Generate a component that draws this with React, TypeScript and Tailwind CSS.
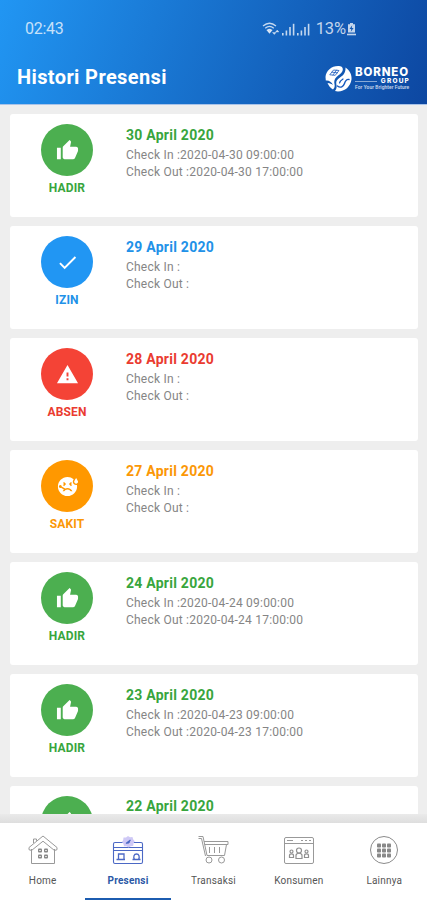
import { MdCheck, MdSick, MdThumbUp, MdWarning } from "react-icons/md";
import type { ReactElement } from "react";
import type { IconType } from "react-icons";

type Status = "HADIR" | "IZIN" | "ABSEN" | "SAKIT";

interface Attendance {
  date: string;
  status: Status;
  checkIn: string;
  checkOut: string;
}

const records: Attendance[] = [
  { date: "30 April 2020", status: "HADIR", checkIn: "2020-04-30 09:00:00", checkOut: "2020-04-30 17:00:00" },
  { date: "29 April 2020", status: "IZIN", checkIn: "", checkOut: "" },
  { date: "28 April 2020", status: "ABSEN", checkIn: "", checkOut: "" },
  { date: "27 April 2020", status: "SAKIT", checkIn: "", checkOut: "" },
  { date: "24 April 2020", status: "HADIR", checkIn: "2020-04-24 09:00:00", checkOut: "2020-04-24 17:00:00" },
  { date: "23 April 2020", status: "HADIR", checkIn: "2020-04-23 09:00:00", checkOut: "2020-04-23 17:00:00" },
];

// Last row is cut by the tab bar, so only its date is in view
const partialRecord = { date: "22 April 2020", status: "HADIR" as Status };

const statusStyles: Record<Status, { icon: IconType; bg: string; text: string }> = {
  HADIR: { icon: MdThumbUp, bg: "bg-[#4caf50]", text: "text-[#38a53d]" },
  IZIN: { icon: MdCheck, bg: "bg-[#2196f3]", text: "text-[#2191e8]" },
  ABSEN: { icon: MdWarning, bg: "bg-[#f44336]", text: "text-[#ea3b30]" },
  SAKIT: { icon: MdSick, bg: "bg-[#ff9800]", text: "text-[#fb9706]" },
};

function SignalBars(): ReactElement {
  return (
    <svg className="h-[13px] w-[13px]" viewBox="0 0 13 13" fill="currentColor">
      <rect x="0" y="10" width="1.6" height="2.5" />
      <rect x="3.6" y="7.5" width="1.6" height="5" />
      <rect x="7.2" y="4" width="1.6" height="8.5" />
      <rect x="10.8" y="0.8" width="1.6" height="11.7" />
    </svg>
  );
}

function StatusBar(): ReactElement {
  return (
    <div className="flex h-[57px] items-center justify-between pl-[25px] pr-[71px] pt-px text-white/75">
      <span className="text-[16px] leading-none tracking-[-0.3px]">02:43</span>
      <div className="flex items-center">
        <svg className="h-[14px] w-[18px]" viewBox="0 0 18 14" fill="none" stroke="currentColor" strokeWidth="1.3">
          <path d="M1 4Q7.5 -1.5 14 4" />
          <path d="M3.2 6.2Q7.5 2.6 11.8 6.2" />
          <path d="M5.3 8.2Q7.5 6.6 9.7 8.2L7.5 10.8Z" fill="currentColor" />
          <path d="M10.5 10.5l1.8 2 1.8-2zM13.6 10l1.6-2 1.7 2z" fill="currentColor" strokeWidth="0.4" />
        </svg>
        <div className="ml-[2px] flex gap-[2px]">
          <SignalBars />
          <SignalBars />
        </div>
        <span className="ml-[6px] text-[16.5px] leading-none tracking-[-0.1px]">13%</span>
        <svg className="ml-px h-[13px] w-[9px]" viewBox="0 0 9 13" fill="currentColor">
          <path fillRule="evenodd" d="M3 0h3v1.3h2v8.2H1V1.3h2zM5.2 2.2 2.5 6h1.8l-.5 2.8L6.6 5H4.8z" />
          <rect x="0" y="10.7" width="9" height="1.6" />
        </svg>
      </div>
    </div>
  );
}

function BrandLogo(): ReactElement {
  return (
    <div className="flex items-center gap-[3px] pt-[3px] text-white">
      <svg className="h-[27px] w-[27px]" viewBox="0 0 27 27">
        <path
          d="M0.500 12C1 5.500 7 0.500 14 1C17.500 1.300 18.500 3.500 17.500 6C16.500 8.500 13.500 10 11.500 12C9 14.500 9 17 9.500 19C10 21.500 9.500 23 8 24.500C5.500 23 3.500 20.500 2.500 18C5 18 6.500 19 8 20C6.500 16.500 3.500 15 0.800 15.500Z"
          fill="#fff"
        />
        <path
          d="M20.500 2.500C25 5.500 27 10 26.500 14.500C25.500 21.500 20 26.500 13 26.500C11.800 26.500 10.800 26.300 10 26C12 23.500 11.800 21.500 11.300 19C10.800 16 12 14.500 15 12.500C18.500 10.200 20.800 7.500 20.500 2.500Z"
          fill="#fff"
        />
        <g fill="none" stroke="#1558bd" strokeLinecap="round">
          <path d="M12.500 21C15.500 23.500 18.500 21.500 19.500 18.500C20.500 15.500 22 14 24 14.500" strokeWidth="1.400" />
          <path d="M14.500 18C15 16 16.500 15 18 14" strokeWidth="1.200" />
          <path d="M5 9.500L8.500 5L14 5.500L10.500 10ZM7 7.200L12.300 7.800M11.500 5L8 10" strokeWidth="0.800" />
        </g>
      </svg>
      <div className="flex w-[55px] flex-col">
        <span className="whitespace-nowrap font-[Inter,sans-serif] text-[11.5px] font-extrabold leading-[12px] tracking-[0.85px]">
          BORNEO
        </span>
        <div className="flex items-center justify-between">
          <span className="h-px w-[22px] bg-white/50" />
          <span className="font-[Inter,sans-serif] text-[6.5px] font-extrabold leading-[7px] tracking-[1.2px]">
            GROUP
          </span>
        </div>
        <span className="whitespace-nowrap text-[4.800px] font-medium leading-[6px] tracking-[0.12px] text-white/80">
          For Your Brighter Future
        </span>
      </div>
    </div>
  );
}

function AttendanceCard({ record }: { record: Attendance }): ReactElement {
  const { icon: Icon, bg, text } = statusStyles[record.status];
  return (
    <div className="flex h-[103px] shrink-0 rounded-[3px] bg-white">
      <div className="flex w-[114px] flex-col items-center pt-[10px]">
        <div className={`flex size-[52px] items-center justify-center rounded-full text-white ${bg}`}>
          <Icon size={23} />
        </div>
        <span className={`mt-[5px] text-[12px] font-bold leading-[14px] tracking-[0.15px] ${text}`}>
          {record.status}
        </span>
      </div>
      <div className="pl-[2px] pt-[12px]">
        <h2 className={`text-[14px] font-bold leading-[18px] tracking-[0.25px] ${text}`}>{record.date}</h2>
        <div className="mt-[3px] text-[12px] leading-[16.5px] tracking-[0.22px] text-[#858585]">
          <p>Check In :{record.checkIn}</p>
          <p>Check Out :{record.checkOut}</p>
        </div>
      </div>
    </div>
  );
}

function PartialCard(): ReactElement {
  const { icon: Icon, bg, text } = statusStyles[partialRecord.status];
  return (
    <div className="flex h-[28px] shrink-0 overflow-hidden rounded-t-[3px] bg-white">
      <div className="flex w-[114px] flex-col items-center pt-[10px]">
        <div className={`flex size-[52px] shrink-0 items-center justify-center rounded-full text-white ${bg}`}>
          <Icon size={23} />
        </div>
      </div>
      <h2 className={`pl-[2px] pt-[12px] text-[14px] font-bold leading-[16px] tracking-[0.25px] ${text}`}>
        {partialRecord.date}
      </h2>
    </div>
  );
}

function HomeIcon(): ReactElement {
  return (
    <svg width="30" height="30" viewBox="0 0 30 30" fill="none" stroke="#999" strokeWidth="1">
      <path d="M3.5 14v14.500h23V14" />
      <path d="M5.500 8V4h3v1.800M15 1 1 12.500v2.200l2.500.8L15 6.200l11.500 9.300 2.500-.8v-2.200z" />
      <g fill="#888" stroke="none">
        <rect x="10" y="13.500" width="4" height="4" rx="1" />
        <rect x="16" y="13.500" width="4" height="4" rx="1" />
        <rect x="10" y="19.500" width="4" height="4" rx="1" />
        <rect x="16" y="19.500" width="4" height="4" rx="1" />
      </g>
      <path d="M11 15.500h2M17 15.500h2M11 21.500h2M17 21.500h2" stroke="#ddd" />
    </svg>
  );
}

function PresenceIcon(): ReactElement {
  return (
    <svg width="32" height="30" viewBox="0 0 32 30" fill="none" stroke="#4b68c5" strokeWidth="1.1">
      <rect x="1.500" y="7.500" width="29" height="21" rx="1.500" />
      <path d="M1.500 12.500h29M1.500 15.500h29" />
      <path d="M6.500 24.500v-5.500h5.500v5.500M4.500 24.500h8.500M22.500 24.500c-1.500-2.500-.5-5.500 2-5.500s3.500 3 2 5.500M20.500 24.500h8" strokeWidth="1.300" />
      <path d="M16 1l2 1.300 2.500-.3.600 2.300 1.700 2-1.300 2-.2 2.500-2.500.4L16.500 12.500l-2-1.300-2.500.1-.6-2.500L10 7l1.200-2 .3-2.400 2.500-.2z" fill="#cfc9f6" stroke="none" />
      <path d="M14 8.500 18.500 5M15.500 8.500l2.500-2" strokeWidth="1.200" />
    </svg>
  );
}

function CartIcon(): ReactElement {
  return (
    <svg width="32" height="30" viewBox="0 0 32 30" fill="none" stroke="#999" strokeWidth="1">
      <path d="M1.500 1.500h4.500l4 19h17.500M1.500 3.500h3l4 17.500" />
      <path d="M7 6.500h24v3H7.500M29.500 9.500l-2 11M12.500 12v6M17.500 12v6M22.500 12v6" />
      <circle cx="12" cy="25" r="3" />
      <circle cx="24.500" cy="25" r="3" />
    </svg>
  );
}

function CustomerIcon(): ReactElement {
  return (
    <svg width="32" height="30" viewBox="0 0 32 30" fill="none" stroke="#999" strokeWidth="1">
      <rect x="1.500" y="2.500" width="29" height="26" rx="1.500" />
      <path d="M1.500 8.500h29M4 5.500h6M18 5.500h2M22 5.500h2M26 5.500h2" />
      <g strokeWidth="1.200" stroke="#909090">
        <circle cx="16" cy="15.500" r="2.500" />
        <path d="M13 23.500v-3c0-3 6-3 6 0v3z" />
        <circle cx="8.500" cy="16.500" r="1.500" />
        <path d="M6.500 22.500v-2c0-2.300 4-2.300 4 0v2z" />
        <circle cx="23.500" cy="16.500" r="1.500" />
        <path d="M21.500 22.500v-2c0-2.300 4-2.300 4 0v2z" />
      </g>
    </svg>
  );
}

function MoreIcon(): ReactElement {
  return (
    <svg width="30" height="30" viewBox="0 0 30 30" fill="none" stroke="#8b8b8b" strokeWidth="1">
      <circle cx="15" cy="15" r="13.500" />
      <g fill="#888" stroke="none">
        <rect x="8" y="8.500" width="4" height="4" rx="0.800" />
        <rect x="13" y="8.500" width="4" height="4" rx="0.800" />
        <rect x="18" y="8.500" width="4" height="4" rx="0.800" />
        <rect x="8" y="13.500" width="4" height="4" rx="0.800" />
        <rect x="13" y="13.500" width="4" height="4" rx="0.800" />
        <rect x="18" y="13.500" width="4" height="4" rx="0.800" />
        <rect x="8" y="18.500" width="4" height="4" rx="0.800" />
        <rect x="13" y="18.500" width="4" height="4" rx="0.800" />
        <rect x="18" y="18.500" width="4" height="4" rx="0.800" />
      </g>
    </svg>
  );
}

const tabs = [
  { label: "Home", icon: HomeIcon },
  { label: "Presensi", icon: PresenceIcon },
  { label: "Transaksi", icon: CartIcon },
  { label: "Konsumen", icon: CustomerIcon },
  { label: "Lainnya", icon: MoreIcon },
];

export default function App(): ReactElement {
  const activeTab = "Presensi";

  return (
    <div className="flex h-[900px] w-[427px] flex-col overflow-hidden bg-[#eeeeee] font-[Roboto,sans-serif]">
      <header className="h-[105px] shrink-0 border-b border-[#a9c3e8] bg-linear-[110deg] from-[#2196f3] to-[#0d47a1]">
        <StatusBar />
        <div className="flex h-[39px] items-center justify-between pl-[17px] pr-[17px]">
          <h1 className="text-[20px] font-bold leading-none tracking-[0.38px] text-white">Histori Presensi</h1>
          <BrandLogo />
        </div>
      </header>

      <main className="flex h-[709px] shrink-0 flex-col gap-[9px] overflow-hidden pl-[10px] pr-[9px] pt-[9px]">
        {records.map((record) => (
          <AttendanceCard key={record.date} record={record} />
        ))}
        <PartialCard />
      </main>

      <div className="h-[9px] shrink-0 bg-linear-to-b from-[#eaeaea] to-[#dedede]" />

      <nav className="grid flex-1 grid-cols-5 bg-white">
        {tabs.map(({ label, icon: Icon }) => {
          const active = label === activeTab;
          return (
            <button
              key={label}
              type="button"
              className={`flex flex-col items-center border-b-2 pt-[12px] ${
                active ? "border-[#1c5cb0] font-bold text-[#2b58a6]" : "border-transparent text-[#555]"
              }`}
            >
              <Icon />
              <span className="mt-[10px] text-[10px] leading-[12px] tracking-[0.2px]">{label}</span>
            </button>
          );
        })}
      </nav>
    </div>
  );
}
